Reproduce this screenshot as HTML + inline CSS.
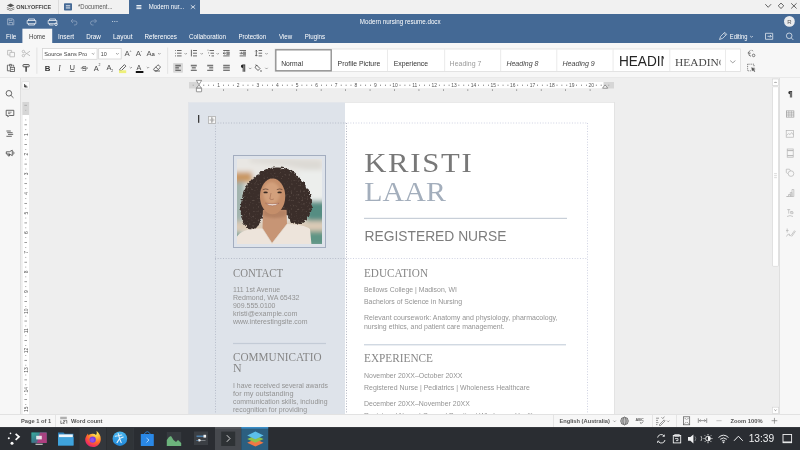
<!DOCTYPE html>
<html><head><meta charset="utf-8">
<style>
*{margin:0;padding:0;box-sizing:border-box}
html,body{width:800px;height:450px;overflow:hidden;background:#eeeeee;font-family:"Liberation Sans",sans-serif}
svg{position:absolute;left:0;top:0}
text{font-family:"Liberation Sans",sans-serif}
.sf,.sf text{font-family:"Liberation Serif",serif}
</style></head><body>
<svg width="800" height="450" viewBox="0 0 800 450" style="will-change:transform">
<defs>
<filter id="blur2" x="-20%" y="-20%" width="140%" height="140%"><feGaussianBlur stdDeviation="2.5"/></filter>
<filter id="blur1" x="-20%" y="-20%" width="140%" height="140%"><feGaussianBlur stdDeviation="0.8"/></filter>
<filter id="curl" x="-20%" y="-20%" width="140%" height="140%">
<feTurbulence type="fractalNoise" baseFrequency="0.35" numOctaves="2" seed="3" result="n"/>
<feDisplacementMap in="SourceGraphic" in2="n" scale="4.5" xChannelSelector="R" yChannelSelector="G"/>
</filter>
<filter id="tex" x="0" y="0" width="100%" height="100%">
<feTurbulence type="fractalNoise" baseFrequency="0.55" numOctaves="1" seed="7" result="n"/>
<feColorMatrix in="n" type="matrix" values="0 0 0 0 0.45  0 0 0 0 0.36  0 0 0 0 0.30  0 0 0 1.2 -0.7" result="c"/>
<feComposite in="c" in2="SourceGraphic" operator="in"/>
</filter>
<clipPath id="pclip"><rect x="237" y="159" width="85" height="85"/></clipPath>
</defs>
<!-- tab bar -->
<rect x="0" y="0" width="800" height="14" fill="#f1f1f1"/>
<!-- header -->
<rect x="0" y="14" width="800" height="29" fill="#446995"/>
<!-- toolbar -->
<rect x="0" y="43" width="800" height="35" fill="#f7f7f7"/>
<rect x="0" y="77.5" width="800" height="1" fill="#dcdcdc"/>
<!-- canvas -->
<rect x="0" y="78" width="800" height="336" fill="#eeeeee"/>
<!-- left panel -->
<rect x="0" y="78" width="20" height="336" fill="#f7f7f7"/>
<rect x="20" y="78" width="1" height="336" fill="#dfdfdf"/>
<!-- right panel -->
<rect x="780" y="78" width="20" height="336" fill="#f7f7f7"/>
<rect x="779" y="78" width="1" height="336" fill="#dfdfdf"/>
<!-- TAB BAR CONTENT -->
<g fill="#4a4a4a">
<!-- onlyoffice logo layers -->
<path d="M10.6 3.6 L14.3 5.4 L10.6 7.2 L6.9 5.4 Z" fill="#555"/>
<path d="M6.9 6.9 L10.6 8.7 L14.3 6.9 L14.3 7.6 L10.6 9.4 L6.9 7.6 Z" fill="#555"/>
<path d="M6.9 8.6 L10.6 10.4 L14.3 8.6 L14.3 9.3 L10.6 11.1 L6.9 9.3 Z" fill="#555"/>
</g>
<text x="16.3" y="9" font-size="5.6" font-weight="700" fill="#444" textLength="34.8" lengthAdjust="spacingAndGlyphs">ONLYOFFICE</text>
<rect x="58" y="0" width="1" height="14" fill="#dcdcdc"/>
<rect x="64" y="3.3" width="8" height="7.3" rx="0.8" fill="#446995"/>
<rect x="65.8" y="5.4" width="4.4" height="0.9" fill="#fff"/>
<rect x="65.8" y="7.5" width="4.4" height="0.9" fill="#fff"/>
<text x="78" y="9.3" font-size="6.6" fill="#555" textLength="34.5" lengthAdjust="spacingAndGlyphs">*Document...</text>
<!-- active tab -->
<rect x="129" y="0" width="71" height="14" fill="#446995"/>
<g fill="#fff"><rect x="136.4" y="5" width="5" height="0.9"/><rect x="136.4" y="6.6" width="5" height="0.9"/><rect x="136.4" y="8.2" width="5" height="0.9"/></g>
<text x="148.7" y="9.3" font-size="6.6" fill="#fff" textLength="35.5" lengthAdjust="spacingAndGlyphs">Modern nur...</text>
<path d="M190.8 5.2 L195.2 8.8 M195.2 5.2 L190.8 8.8" stroke="#fff" stroke-width="0.7"/>
<!-- window controls -->
<path d="M765.3 4.2 L768.2 7.3 L771.1 4.2" stroke="#555" stroke-width="0.9" fill="none"/>
<path d="M781 3.1 L783.8 5.8 L781 8.5 L778.2 5.8 Z" stroke="#555" stroke-width="0.9" fill="none"/>
<path d="M791.2 3.3 L796.6 8.5 M796.6 3.3 L791.2 8.5" stroke="#555" stroke-width="0.9"/>

<!-- HEADER ROW 1 -->
<path d="M7.6 18.8 h5 l1.2 1.2 v4.8 h-6.2 z M9 18.8 v1.8 h3 v-1.8 M9 24.8 v-2.3 h3.6 v2.3" stroke="#9fb2c9" stroke-width="0.8" fill="none"/>
<g stroke="#e6ebf1" stroke-width="0.85" fill="none">
<!-- print -->
<path d="M28.5 20.5 v-1.5 h6 v1.5 M27.2 20.5 h8.6 v3.2 h-8.6 z M28.5 23.7 v1.3 h6 v-1.3"/>
<!-- quick print -->
<path d="M49.5 20.5 v-1.5 h6 v1.5 M48.2 20.5 h8.6 v3.2 h-8.6 z M49.5 23.7 v1.3 h4"/>
<circle cx="56" cy="24.3" r="1.3"/>
</g>
<g stroke="#8aa0bd" stroke-width="0.8" fill="none">
<path d="M71 21 l2 -2 M71 21 l2 2 M71 21 h4 a2 2 0 0 1 0 4 h-1"/>
<path d="M96.5 21 l-2 -2 M96.5 21 l-2 2 M96.5 21 h-4 a2 2 0 0 0 0 4 h1"/>
</g>
<g fill="#dfe6ee"><circle cx="112.6" cy="21.5" r="0.55"/><circle cx="114.8" cy="21.5" r="0.55"/><circle cx="117" cy="21.5" r="0.55"/></g>
<text x="359.8" y="24" font-size="6.9" fill="#fff" textLength="80.8" lengthAdjust="spacingAndGlyphs">Modern nursing resume.docx</text>
<circle cx="789.4" cy="21.4" r="5.4" fill="#e9ebee"/>
<text x="789.4" y="23.5" font-size="6" fill="#555" text-anchor="middle">R</text>

<!-- HEADER ROW 2: tabs -->
<rect x="22.4" y="28.7" width="29.8" height="14.3" fill="#f7f7f7"/>
<g font-size="7" fill="#fff">
<text x="6.1" y="38.9" textLength="10.3" lengthAdjust="spacingAndGlyphs">File</text>
<text x="29" y="38.9" fill="#444" textLength="16.3" lengthAdjust="spacingAndGlyphs">Home</text>
<text x="57.9" y="38.9" textLength="16.2" lengthAdjust="spacingAndGlyphs">Insert</text>
<text x="86.2" y="38.9" textLength="14.7" lengthAdjust="spacingAndGlyphs">Draw</text>
<text x="112.9" y="38.9" textLength="19.6" lengthAdjust="spacingAndGlyphs">Layout</text>
<text x="144.5" y="38.9" textLength="32.3" lengthAdjust="spacingAndGlyphs">References</text>
<text x="189" y="38.9" textLength="36.9" lengthAdjust="spacingAndGlyphs">Collaboration</text>
<text x="238.4" y="38.9" textLength="27.7" lengthAdjust="spacingAndGlyphs">Protection</text>
<text x="279" y="38.9" textLength="13.2" lengthAdjust="spacingAndGlyphs">View</text>
<text x="304.8" y="38.9" textLength="20.3" lengthAdjust="spacingAndGlyphs">Plugins</text>
<text x="729.8" y="38.9" textLength="17.6" lengthAdjust="spacingAndGlyphs">Editing</text>
</g>
<g stroke="#dfe6ee" stroke-width="0.8" fill="none">
<path d="M719.5 39.5 l1.2 -3.2 l4 -4 l2 2 l-4 4 z M723.8 33.2 l2 2"/>
<path d="M750.2 36 l1.3 1.3 l1.3 -1.3"/>
<path d="M765.5 33.3 h7.2 v6 h-7.2 z M767.5 36.3 h3.8 M770 35 l1.3 1.3 l-1.3 1.3"/>
<circle cx="789.2" cy="35.8" r="2.8"/><path d="M791.2 37.8 l2.2 2.2"/>
</g>
<!-- TOOLBAR -->
<g fill="none" stroke-width="0.85">
<!-- copy (disabled) -->
<g stroke="#b8b8b8"><path d="M7.6 50.4 h4 v4.6 h-4 z"/><path d="M9.9 52.4 h4.6 v4.4 h-4.6 z" fill="#f7f7f7"/></g>
<!-- scissors (disabled) -->
<g stroke="#b8b8b8"><circle cx="23.4" cy="51.5" r="1.2"/><circle cx="23.4" cy="55.6" r="1.2"/><path d="M24.5 52.1 L30 55.8 M24.5 55 L30 51.2"/></g>
<!-- paste -->
<g stroke="#555"><path d="M8.6 65.2 h-1.2 v5.6 h2.4 M12.4 65.2 h1.2 v1.4 M9.4 64.4 h2.2 v1.6 h-2.2 z"/><rect x="10.3" y="67.3" width="4.2" height="4.2" fill="#f7f7f7"/><path d="M11.2 69.4 h2.4" /></g>
<!-- format painter -->
<g stroke="#333"><rect x="23" y="64.6" width="6.2" height="2.2" rx="0.6"/><path d="M26.1 66.8 v4.9" stroke-width="1.4"/></g>
</g>
<rect x="36.5" y="47.5" width="0.8" height="26.3" fill="#dedede"/>
<!-- font combos -->
<rect x="42.5" y="48.5" width="54.6" height="10.8" fill="#fff" stroke="#d4d4d4" stroke-width="0.8"/>
<text x="44.2" y="56.1" font-size="5.9" fill="#444" textLength="43" lengthAdjust="spacingAndGlyphs">Source Sans Pro</text>
<path d="M91.9 53.1 l1.3 1.3 l1.3 -1.3" stroke="#666" stroke-width="0.6" fill="none"/>
<rect x="98.7" y="48.4" width="22.5" height="10.6" fill="#fff" stroke="#d4d4d4" stroke-width="0.8"/>
<text x="100.8" y="56.1" font-size="5.9" fill="#444" textLength="6" lengthAdjust="spacingAndGlyphs">10</text>
<path d="M116.1 53.1 l1.3 1.3 l1.3 -1.3" stroke="#666" stroke-width="0.6" fill="none"/>
<g fill="#555">
<text x="124.6" y="56" font-size="7.8">A</text><text x="129.6" y="52.2" font-size="3.6">+</text>
<text x="135.8" y="56" font-size="7.8">A</text><text x="140.7" y="52.2" font-size="3.8">-</text>
<text x="146.6" y="56.2" font-size="7.8">A</text><text x="151.8" y="56.4" font-size="5.4" font-weight="700">a</text>
</g>
<path d="M158.1 53.1 l1.2 1.2 l1.2 -1.2" stroke="#666" stroke-width="0.6" fill="none"/>
<!-- row 2 text formatting -->
<text x="44.8" y="70.9" font-size="7.8" font-weight="700" fill="#333">B</text>
<text x="58.3" y="70.9" font-size="7.6" font-style="italic" fill="#444" class="sf">I</text>
<text x="69.8" y="70.3" font-size="7.2" fill="#444">U</text><rect x="69.7" y="71" width="5" height="0.7" fill="#444"/>
<text x="81.8" y="70.9" font-size="7.4" fill="#444">S</text><rect x="80.8" y="67.7" width="7.2" height="0.7" fill="#444"/>
<text x="93.8" y="71" font-size="7.4" fill="#444">A</text><text x="98.6" y="66.4" font-size="3.5" fill="#444">2</text>
<text x="106.4" y="70.4" font-size="7.4" fill="#444">A</text><text x="111.2" y="72" font-size="3.5" fill="#444">2</text>
<g fill="none" stroke="#444" stroke-width="0.8">
<path d="M119.8 69.2 l4.6 -4.6 l1.5 1.5 l-4.6 4.6 h-1.5 z"/>
<path d="M129.6 67 l1.2 1.2 l1.2 -1.2" stroke="#666" stroke-width="0.6"/>
<path d="M146.8 67 l1.2 1.2 l1.2 -1.2" stroke="#666" stroke-width="0.6"/>
<path d="M153.6 69.2 l3.8 -3.8 q0.8 -0.8 1.6 0 l0.9 0.9 q0.8 0.8 0 1.6 l-3 3 h-2.4 z M155.7 66.9 l2.6 2.6 M155 71 h5"/>
</g>
<rect x="119" y="70.3" width="7.2" height="2.8" fill="#eef07a"/>
<text x="136.6" y="70" font-size="7.2" fill="#444">A</text>
<rect x="135.8" y="71" width="7.6" height="2" fill="#111"/>
<rect x="167.3" y="47.5" width="0.8" height="26.3" fill="#dedede"/>
<!-- paragraph row1 -->
<g stroke="#444" stroke-width="0.8" fill="none">
<path d="M177 50.5 h4.6 M177 53.2 h4.6 M177 55.9 h4.6"/>
<path d="M175.3 50.5 h0.6 M175.3 53.2 h0.6 M175.3 55.9 h0.6" stroke-width="1.1"/>
<path d="M193 50.5 h4 M193 53.2 h4 M193 55.9 h4 M191.4 49.8 v6.6"/>
<path d="M209.5 50.5 h4.5 M210.5 53.2 h3.5 M211.5 55.9 h2.5 M207.6 50.2 h0.8 M208.3 52.9 h0.8 M209.2 55.6 h0.8"/>
<path d="M223.2 50.5 h6.4 M226.4 52.3 h3.2 M226.4 54.1 h3.2 M223.2 55.9 h6.4 M223.3 53.2 h2.6 M224.5 52 l-1.2 1.2 l1.2 1.2"/><rect x="226.6" y="51.8" width="3" height="2.8" fill="#888" stroke="none"/>
<path d="M239.6 50.5 h6.4 M242.8 52.3 h3.2 M242.8 54.1 h3.2 M239.6 55.9 h6.4 M239.6 53.2 h2.6 M241.2 52 l1.2 1.2 l-1.2 1.2"/><rect x="243" y="51.8" width="3" height="2.8" fill="#888" stroke="none"/>
<path d="M258.6 50.5 h3.5 M258.6 53.2 h3.5 M258.6 55.9 h3.5 M256.3 50.3 v5.8 M255.3 51.3 l1 -1 l1 1 M255.3 55.1 l1 1 l1 -1"/>
</g>
<g stroke="#666" stroke-width="0.6" fill="none">
<path d="M184.5 53.1 l1.2 1.2 l1.2 -1.2"/><path d="M200.5 53.1 l1.2 1.2 l1.2 -1.2"/><path d="M216.5 53.1 l1.2 1.2 l1.2 -1.2"/><path d="M265.3 53.1 l1.2 1.2 l1.2 -1.2"/>
<path d="M249 67.8 l1.2 1.2 l1.2 -1.2"/><path d="M265.3 67.8 l1.2 1.2 l1.2 -1.2"/>
</g>
<!-- paragraph row2 -->
<rect x="173.1" y="62.9" width="9.9" height="9.8" rx="0.8" fill="#d9d9d9"/>
<g stroke="#444" stroke-width="0.9" fill="none">
<path d="M175.3 65.3 h5.6 M175.3 67.8 h3.6 M175.3 70.3 h5.6"/>
<path d="M175.3 66.5 h5.6 M175.3 69 h3.6" stroke-width="0.5" stroke="#777"/>
<path d="M190.8 65.3 h6 M191.8 67.8 h4 M190.8 70.3 h6"/>
<path d="M190.8 66.5 h6 M191.8 69 h4" stroke-width="0.5" stroke="#888"/>
<path d="M207.2 65.3 h6 M209.2 67.8 h4 M207.2 70.3 h6"/>
<path d="M207.2 66.5 h6 M209.2 69 h4" stroke-width="0.5" stroke="#888"/>
<path d="M223.2 65.3 h6.6 M223.2 67.8 h6.6 M223.2 70.3 h6.6"/>
<path d="M223.2 66.5 h6.6 M223.2 69 h6.6" stroke-width="0.5" stroke="#888"/>
</g>
<g fill="#222"><path d="M242.4 64.5 h2.8 v7.2 h-0.9 v-6.4 h-0.7 v6.4 h-0.9 v-3.6 a1.8 1.8 0 0 1 0 -3.6 z"/></g>
<g stroke="#444" stroke-width="0.8" fill="none"><path d="M256.5 65 l3.5 3.5 l-2 2 l-2.4 -2.4 q-0.8 -0.8 0 -1.6 z M255.8 64.5 l1.5 1.5"/></g>
<circle cx="261" cy="71" r="0.7" fill="#333"/>
<!-- style gallery -->
<rect x="275" y="49" width="465.5" height="22.5" fill="#fff" stroke="#dcdcdc" stroke-width="0.8"/>
<g fill="#e2e2e2">
<rect x="387.2" y="49.5" width="0.7" height="21.5"/><rect x="444.4" y="49.5" width="0.7" height="21.5"/><rect x="500.4" y="49.5" width="0.7" height="21.5"/><rect x="556.5" y="49.5" width="0.7" height="21.5"/><rect x="612.7" y="49.5" width="0.7" height="21.5"/><rect x="669.5" y="49.5" width="0.7" height="21.5"/><rect x="725.3" y="49.5" width="0.7" height="21.5"/>
</g>
<rect x="275.8" y="49.8" width="55.4" height="21" fill="#fff" stroke="#8a8a8a" stroke-width="1.3"/>
<g font-size="7" fill="#333">
<text x="281.2" y="65.8" textLength="21.8" lengthAdjust="spacingAndGlyphs">Normal</text>
<text x="337.6" y="65.8" textLength="42.7" lengthAdjust="spacingAndGlyphs">Profile Picture</text>
<text x="393.7" y="65.8" textLength="34.4" lengthAdjust="spacingAndGlyphs">Experience</text>
<text x="449.6" y="65.8" fill="#9a9a9a" textLength="31.8" lengthAdjust="spacingAndGlyphs">Heading 7</text>
<text x="506.4" y="65.8" font-style="italic" fill="#444" textLength="32" lengthAdjust="spacingAndGlyphs">Heading 8</text>
<text x="562.5" y="65.8" font-style="italic" fill="#444" textLength="32.3" lengthAdjust="spacingAndGlyphs">Heading 9</text>
</g>
<svg x="613.5" y="49.5" width="50.3" height="21.5" overflow="hidden"><text x="0" y="0" font-size="14.2" fill="#262626" transform="translate(5.4 16.25) scale(0.96 1)">HEADING 1</text></svg>
<svg x="670.3" y="49.5" width="50.2" height="21.5" overflow="hidden"><text class="sf" x="0" y="0" font-size="11.4" fill="#4a4a4a" transform="translate(4.8 16.2) scale(1 1)">HEADING 2</text></svg>
<path d="M730.2 60.6 l2.6 2.2 l2.6 -2.2" stroke="#777" stroke-width="0.7" fill="none"/>
<g stroke="#555" stroke-width="0.75" fill="none">
<path d="M750.3 50.3 l-2.4 2.8 h2.8 M749 53.1 q-1 2.6 2 3.2"/><circle cx="753.6" cy="55.4" r="1.3"/><path d="M751.6 49.9 l1.3 1.3"/>
<path d="M747.6 64.2 h6.4 v3.2 M747.6 64.2 v6.6 h3.2" stroke-dasharray="1 0.8"/><path d="M751.6 67.5 l3.6 1.6 l-1.5 0.4 l1.3 1.8 l-0.7 0.4 l-1.2 -1.8 l-1 1.2 z" fill="#555" stroke-width="0.3"/>
</g>
<!-- left panel icons -->
<g stroke="#444" stroke-width="0.8" fill="none">
<circle cx="8.9" cy="93.3" r="2.8"/><path d="M10.9 95.3 l2.6 2.6"/>
<path d="M6.2 110.3 h7.6 v5.2 h-4.6 l-1.4 1.3 v-1.3 h-1.6 z"/><path d="M8 112.2 h3.6 M8 113.6 h2.4" stroke-width="0.6"/>
<path d="M6.4 131 h4.4 M7.2 132.7 h5.4 M8 134.4 h5.2 M6.4 136.3 h5.4"/>
<path d="M6.3 151.8 h3 l3 -1.6 v5.4 l-3 -1.6 h-3 z M8 153.9 v2 h1.5 v-2"/><path d="M13.2 151.6 a1.6 1.6 0 0 1 0 2.8"/>
</g>
<!-- ruler corner -->
<rect x="22" y="81.5" width="7.5" height="7.5" rx="0.8" fill="#fbfbfb" stroke="#d8d8d8" stroke-width="0.6"/>
<path d="M24.6 84 v3 h3" stroke="#444" stroke-width="0.9" fill="none"/><rect x="24.6" y="85.3" width="1.8" height="1.7" fill="#444"/>
<!-- horizontal ruler -->
<rect x="189" y="82" width="425" height="6.5" fill="#d6d6d6"/>
<rect x="198" y="82" width="405.5" height="6.5" fill="#fff"/>
<g id="hticks" fill="#666"><rect x="203.50" y="84.6" width="0.65" height="1.4"/><rect x="208.41" y="84.6" width="0.65" height="1.4"/><rect x="213.31" y="84.6" width="0.65" height="1.4"/><text x="218.52" y="87.2" font-size="4.9" text-anchor="middle" fill="#555">1</text><rect x="223.12" y="84.6" width="0.65" height="1.4"/><rect x="228.03" y="84.6" width="0.65" height="1.4"/><rect x="232.94" y="84.6" width="0.65" height="1.4"/><text x="238.14" y="87.2" font-size="4.9" text-anchor="middle" fill="#555">2</text><rect x="242.75" y="84.6" width="0.65" height="1.4"/><rect x="247.65" y="84.6" width="0.65" height="1.4"/><rect x="252.56" y="84.6" width="0.65" height="1.4"/><text x="257.76" y="87.2" font-size="4.9" text-anchor="middle" fill="#555">3</text><rect x="262.37" y="84.6" width="0.65" height="1.4"/><rect x="267.27" y="84.6" width="0.65" height="1.4"/><rect x="272.18" y="84.6" width="0.65" height="1.4"/><text x="277.38" y="87.2" font-size="4.9" text-anchor="middle" fill="#555">4</text><rect x="281.99" y="84.6" width="0.65" height="1.4"/><rect x="286.89" y="84.6" width="0.65" height="1.4"/><rect x="291.80" y="84.6" width="0.65" height="1.4"/><text x="297.00" y="87.2" font-size="4.9" text-anchor="middle" fill="#555">5</text><rect x="301.61" y="84.6" width="0.65" height="1.4"/><rect x="306.51" y="84.6" width="0.65" height="1.4"/><rect x="311.42" y="84.6" width="0.65" height="1.4"/><text x="316.62" y="87.2" font-size="4.9" text-anchor="middle" fill="#555">6</text><rect x="321.22" y="84.6" width="0.65" height="1.4"/><rect x="326.13" y="84.6" width="0.65" height="1.4"/><rect x="331.04" y="84.6" width="0.65" height="1.4"/><text x="336.24" y="87.2" font-size="4.9" text-anchor="middle" fill="#555">7</text><rect x="340.84" y="84.6" width="0.65" height="1.4"/><rect x="345.75" y="84.6" width="0.65" height="1.4"/><rect x="350.66" y="84.6" width="0.65" height="1.4"/><text x="355.86" y="87.2" font-size="4.9" text-anchor="middle" fill="#555">8</text><rect x="360.46" y="84.6" width="0.65" height="1.4"/><rect x="365.37" y="84.6" width="0.65" height="1.4"/><rect x="370.28" y="84.6" width="0.65" height="1.4"/><text x="375.48" y="87.2" font-size="4.9" text-anchor="middle" fill="#555">9</text><rect x="380.08" y="84.6" width="0.65" height="1.4"/><rect x="384.99" y="84.6" width="0.65" height="1.4"/><rect x="389.90" y="84.6" width="0.65" height="1.4"/><text x="395.10" y="87.2" font-size="4.9" text-anchor="middle" fill="#555">10</text><rect x="399.70" y="84.6" width="0.65" height="1.4"/><rect x="404.61" y="84.6" width="0.65" height="1.4"/><rect x="409.52" y="84.6" width="0.65" height="1.4"/><text x="414.72" y="87.2" font-size="4.9" text-anchor="middle" fill="#555">11</text><rect x="419.32" y="84.6" width="0.65" height="1.4"/><rect x="424.23" y="84.6" width="0.65" height="1.4"/><rect x="429.14" y="84.6" width="0.65" height="1.4"/><text x="434.34" y="87.2" font-size="4.9" text-anchor="middle" fill="#555">12</text><rect x="438.94" y="84.6" width="0.65" height="1.4"/><rect x="443.85" y="84.6" width="0.65" height="1.4"/><rect x="448.75" y="84.6" width="0.65" height="1.4"/><text x="453.96" y="87.2" font-size="4.9" text-anchor="middle" fill="#555">13</text><rect x="458.56" y="84.6" width="0.65" height="1.4"/><rect x="463.47" y="84.6" width="0.65" height="1.4"/><rect x="468.38" y="84.6" width="0.65" height="1.4"/><text x="473.58" y="87.2" font-size="4.9" text-anchor="middle" fill="#555">14</text><rect x="478.19" y="84.6" width="0.65" height="1.4"/><rect x="483.09" y="84.6" width="0.65" height="1.4"/><rect x="488.00" y="84.6" width="0.65" height="1.4"/><text x="493.20" y="87.2" font-size="4.9" text-anchor="middle" fill="#555">15</text><rect x="497.81" y="84.6" width="0.65" height="1.4"/><rect x="502.71" y="84.6" width="0.65" height="1.4"/><rect x="507.62" y="84.6" width="0.65" height="1.4"/><text x="512.82" y="87.2" font-size="4.9" text-anchor="middle" fill="#555">16</text><rect x="517.43" y="84.6" width="0.65" height="1.4"/><rect x="522.33" y="84.6" width="0.65" height="1.4"/><rect x="527.24" y="84.6" width="0.65" height="1.4"/><text x="532.44" y="87.2" font-size="4.9" text-anchor="middle" fill="#555">17</text><rect x="537.05" y="84.6" width="0.65" height="1.4"/><rect x="541.95" y="84.6" width="0.65" height="1.4"/><rect x="546.86" y="84.6" width="0.65" height="1.4"/><text x="552.06" y="87.2" font-size="4.9" text-anchor="middle" fill="#555">18</text><rect x="556.67" y="84.6" width="0.65" height="1.4"/><rect x="561.57" y="84.6" width="0.65" height="1.4"/><rect x="566.48" y="84.6" width="0.65" height="1.4"/><text x="571.68" y="87.2" font-size="4.9" text-anchor="middle" fill="#555">19</text><rect x="576.29" y="84.6" width="0.65" height="1.4"/><rect x="581.19" y="84.6" width="0.65" height="1.4"/><rect x="586.10" y="84.6" width="0.65" height="1.4"/><text x="591.30" y="87.2" font-size="4.9" text-anchor="middle" fill="#555">20</text><rect x="595.91" y="84.6" width="0.65" height="1.4"/><rect x="600.81" y="84.6" width="0.65" height="1.4"/><rect x="223.00" y="89.3" width="0.7" height="1.5"/><rect x="247.45" y="89.3" width="0.7" height="1.5"/><rect x="271.90" y="89.3" width="0.7" height="1.5"/><rect x="296.35" y="89.3" width="0.7" height="1.5"/><rect x="320.80" y="89.3" width="0.7" height="1.5"/><rect x="345.25" y="89.3" width="0.7" height="1.5"/><rect x="369.70" y="89.3" width="0.7" height="1.5"/><rect x="394.15" y="89.3" width="0.7" height="1.5"/><rect x="418.60" y="89.3" width="0.7" height="1.5"/><rect x="443.05" y="89.3" width="0.7" height="1.5"/><rect x="467.50" y="89.3" width="0.7" height="1.5"/><rect x="491.95" y="89.3" width="0.7" height="1.5"/><rect x="516.40" y="89.3" width="0.7" height="1.5"/><rect x="540.85" y="89.3" width="0.7" height="1.5"/><rect x="565.30" y="89.3" width="0.7" height="1.5"/><rect x="589.75" y="89.3" width="0.7" height="1.5"/></g>
<!-- indent markers -->
<g fill="#fff" stroke="#555" stroke-width="0.6">
<path d="M196.4 80.4 h5.2 l-2.6 4.4 z"/><path d="M199 85 l2.6 3.2 h-5.2 z"/><rect x="196.4" y="88.2" width="5.2" height="3.6" rx="0.5"/>
<path d="M602.5 88.2 l2.6 -3.3 l2.6 3.3 z"/>
</g>
<!-- vertical ruler -->
<rect x="22.4" y="102" width="6.7" height="312" fill="#d6d6d6"/>
<rect x="22.4" y="115" width="6.7" height="299" fill="#fff"/>
<rect x="24.4" y="104.9" width="2.6" height="0.65" fill="#999"/><rect x="25.3" y="109.9" width="0.9" height="0.65" fill="#999"/><rect x="192.8" y="84.6" width="0.65" height="1.4" fill="#999"/><rect x="608.5" y="84.6" width="0.65" height="1.4" fill="#999"/>
<g id="vticks" fill="#666"><rect x="25.3" y="119.61" width="0.9" height="0.65"/><rect x="24.4" y="124.51" width="2.6" height="0.65"/><rect x="25.3" y="129.41" width="0.9" height="0.65"/><text transform="translate(27.6 134.62) rotate(-90)" font-size="4.9" text-anchor="middle" fill="#555">1</text><rect x="25.3" y="139.22" width="0.9" height="0.65"/><rect x="24.4" y="144.13" width="2.6" height="0.65"/><rect x="25.3" y="149.03" width="0.9" height="0.65"/><text transform="translate(27.6 154.24) rotate(-90)" font-size="4.9" text-anchor="middle" fill="#555">2</text><rect x="25.3" y="158.84" width="0.9" height="0.65"/><rect x="24.4" y="163.75" width="2.6" height="0.65"/><rect x="25.3" y="168.66" width="0.9" height="0.65"/><text transform="translate(27.6 173.86) rotate(-90)" font-size="4.9" text-anchor="middle" fill="#555">3</text><rect x="25.3" y="178.46" width="0.9" height="0.65"/><rect x="24.4" y="183.37" width="2.6" height="0.65"/><rect x="25.3" y="188.27" width="0.9" height="0.65"/><text transform="translate(27.6 193.48) rotate(-90)" font-size="4.9" text-anchor="middle" fill="#555">4</text><rect x="25.3" y="198.08" width="0.9" height="0.65"/><rect x="24.4" y="202.99" width="2.6" height="0.65"/><rect x="25.3" y="207.89" width="0.9" height="0.65"/><text transform="translate(27.6 213.10) rotate(-90)" font-size="4.9" text-anchor="middle" fill="#555">5</text><rect x="25.3" y="217.70" width="0.9" height="0.65"/><rect x="24.4" y="222.61" width="2.6" height="0.65"/><rect x="25.3" y="227.51" width="0.9" height="0.65"/><text transform="translate(27.6 232.72) rotate(-90)" font-size="4.9" text-anchor="middle" fill="#555">6</text><rect x="25.3" y="237.32" width="0.9" height="0.65"/><rect x="24.4" y="242.23" width="2.6" height="0.65"/><rect x="25.3" y="247.13" width="0.9" height="0.65"/><text transform="translate(27.6 252.34) rotate(-90)" font-size="4.9" text-anchor="middle" fill="#555">7</text><rect x="25.3" y="256.94" width="0.9" height="0.65"/><rect x="24.4" y="261.85" width="2.6" height="0.65"/><rect x="25.3" y="266.75" width="0.9" height="0.65"/><text transform="translate(27.6 271.96) rotate(-90)" font-size="4.9" text-anchor="middle" fill="#555">8</text><rect x="25.3" y="276.56" width="0.9" height="0.65"/><rect x="24.4" y="281.47" width="2.6" height="0.65"/><rect x="25.3" y="286.38" width="0.9" height="0.65"/><text transform="translate(27.6 291.58) rotate(-90)" font-size="4.9" text-anchor="middle" fill="#555">9</text><rect x="25.3" y="296.19" width="0.9" height="0.65"/><rect x="24.4" y="301.09" width="2.6" height="0.65"/><rect x="25.3" y="306.00" width="0.9" height="0.65"/><text transform="translate(27.6 311.20) rotate(-90)" font-size="4.9" text-anchor="middle" fill="#555">10</text><rect x="25.3" y="315.81" width="0.9" height="0.65"/><rect x="24.4" y="320.71" width="2.6" height="0.65"/><rect x="25.3" y="325.62" width="0.9" height="0.65"/><text transform="translate(27.6 330.82) rotate(-90)" font-size="4.9" text-anchor="middle" fill="#555">11</text><rect x="25.3" y="335.43" width="0.9" height="0.65"/><rect x="24.4" y="340.33" width="2.6" height="0.65"/><rect x="25.3" y="345.24" width="0.9" height="0.65"/><text transform="translate(27.6 350.44) rotate(-90)" font-size="4.9" text-anchor="middle" fill="#555">12</text><rect x="25.3" y="355.05" width="0.9" height="0.65"/><rect x="24.4" y="359.95" width="2.6" height="0.65"/><rect x="25.3" y="364.85" width="0.9" height="0.65"/><text transform="translate(27.6 370.06) rotate(-90)" font-size="4.9" text-anchor="middle" fill="#555">13</text><rect x="25.3" y="374.67" width="0.9" height="0.65"/><rect x="24.4" y="379.57" width="2.6" height="0.65"/><rect x="25.3" y="384.48" width="0.9" height="0.65"/><text transform="translate(27.6 389.68) rotate(-90)" font-size="4.9" text-anchor="middle" fill="#555">14</text><rect x="25.3" y="394.29" width="0.9" height="0.65"/><rect x="24.4" y="399.19" width="2.6" height="0.65"/><rect x="25.3" y="404.10" width="0.9" height="0.65"/><text transform="translate(27.6 409.30) rotate(-90)" font-size="4.9" text-anchor="middle" fill="#555">15</text></g>
<!-- scrollbar -->
<rect x="772.5" y="79" width="6" height="6.3" fill="#fff" stroke="#d2d2d2" stroke-width="0.6"/>
<path d="M774.4 83 l1.1 -1.1 l1.1 1.1" stroke="#666" stroke-width="0.7" fill="none"/>
<rect x="772.5" y="86.7" width="6" height="179.7" rx="1" fill="#fff" stroke="#d2d2d2" stroke-width="0.6"/>
<g fill="#c2c2c2"><rect x="774.1" y="173.5" width="2.8" height="0.6"/><rect x="774.1" y="175.5" width="2.8" height="0.6"/><rect x="774.1" y="177.5" width="2.8" height="0.6"/></g>
<rect x="772.3" y="407.2" width="6.4" height="6.3" fill="#fff" stroke="#d2d2d2" stroke-width="0.6"/>
<path d="M774.4 409.6 l1.1 1.1 l1.1 -1.1" stroke="#666" stroke-width="0.7" fill="none"/>
<!-- right panel icons -->
<path d="M789.5 91 h2.6 v6.4 h-0.8 v-5.6 h-0.6 v5.6 h-0.8 v-3.2 a1.6 1.6 0 0 1 0 -3.2 z" fill="#333"/>
<g stroke="#8c8c8c" stroke-width="0.7" fill="none">
<rect x="786.3" y="110.9" width="7.6" height="6.2" stroke-width="0.6"/><path d="M786.3 112.9 h7.6 M786.3 115 h7.6" stroke-width="0.6"/><path d="M788.8 110.9 v6.2 M791.4 110.9 v6.2" stroke-width="0.45"/>
</g>
<g stroke="#b4b4b4" stroke-width="0.7" fill="none">
<rect x="786.2" y="130.4" width="7.4" height="6.8"/><path d="M786.6 135.5 l2 -2 l1.4 1.2 l1.6 -2.2 l2 2.6"/>
<rect x="787.2" y="149" width="6" height="8.2"/><path d="M787.2 150.6 h6 M787.2 155.6 h6" stroke-width="1"/>
<path d="M786.3 169.2 h3.2 l1.2 1.8"/><path d="M786.3 169.2 v3.4 l1.6 1"/><circle cx="791" cy="173.6" r="2.8"/>
<path d="M786.5 196.5 h2 v-2 h1.8 v2 M790.3 196.5 v-4 h1.6 v4 M792 196.5 v-7 h1.8 v7 h-7.3"/>
<path d="M787.2 209.6 h3 M788.7 209.6 v4 M790.2 211.6 h2 a0.8 0.8 0 0 1 0.8 0.8 v1.2 h-1.8 a0.8 0.8 0 0 1 0 -1.6 h1.6 M787 216.5 q3 -1.8 6 0"/>
<path d="M787.2 228.5 v4 M786 230.5 h2.6 M786.5 236.5 q1 -3 3 -2.4 q-1 2 1.4 1.6 l3.6 -5 l0.8 0.8 l-3.6 5" />
</g>
<!-- PAGE -->
<rect x="188" y="102" width="426" height="312" fill="#fff"/>
<rect x="188" y="102" width="157" height="312" fill="#dee3ea"/>
<rect x="188" y="102" width="1.2" height="312" fill="#e2e4e8"/>
<rect x="614" y="102" width="1" height="312" fill="#e3e3e3"/>
<rect x="345" y="102" width="269" height="1" fill="#e9e9e9"/>
<rect x="189" y="102" width="156" height="1" fill="#e3e6eb"/>
<g stroke="#b6bcc9" stroke-width="1" stroke-dasharray="1 1.67" fill="none">
<line x1="215" y1="123" x2="345" y2="123"/>
<line x1="215" y1="258.5" x2="345" y2="258.5"/>
<line x1="215.5" y1="123" x2="215.5" y2="414"/>
</g>
<g stroke="#cfd2e2" stroke-width="1" stroke-dasharray="1 1.67" fill="none">
<line x1="345" y1="123" x2="588" y2="123"/>
<line x1="345" y1="258.5" x2="588" y2="258.5"/>
<line x1="587.5" y1="123" x2="587.5" y2="414"/>
</g>
<line x1="346.5" y1="123" x2="346.5" y2="414" stroke="#b0b3bf" stroke-width="1" stroke-dasharray="1 1.67"/>
<rect x="198" y="115" width="1.3" height="7.8" fill="#3a3a3a"/>
<rect x="208.5" y="116.5" width="7" height="7" fill="#f6f6f6" stroke="#b0b0b0" stroke-width="0.8"/>
<path d="M212 117.6v4.8M209.6 120h4.8M211.2 118.4l0.8-0.8l0.8 0.8M211.2 121.6l0.8 0.8l0.8-0.8" stroke="#666" stroke-width="0.55" fill="none"/>
<rect x="233.5" y="155.5" width="92" height="92" fill="#dee3ea" stroke="#a3adbf" stroke-width="1"/>
<text class="sf" x="0" y="0" font-size="27.4" fill="#787878" textLength="96" lengthAdjust="spacing" transform="translate(364.2 172) scale(1.12 1)">KRISTI</text>
<text class="sf" x="0" y="0" font-size="26.6" fill="#a3aebc" textLength="73" lengthAdjust="spacing" transform="translate(364.2 200.8) scale(1.12 1)">LAAR</text>
<rect x="364" y="217.8" width="203" height="1.1" fill="#c3cad4"/>
<text x="364.5" y="241" font-size="14.6" fill="#7d7d7d" textLength="142" lengthAdjust="spacingAndGlyphs">REGISTERED NURSE</text>
<g class="sf" font-size="12" fill="#868686">
<text x="233" y="277" textLength="50.2" lengthAdjust="spacingAndGlyphs">CONTACT</text>
<text x="233" y="361" textLength="88.5" lengthAdjust="spacingAndGlyphs">COMMUNICATIO</text>
<text x="233" y="372.3">N</text>
<text x="364" y="277" textLength="64" lengthAdjust="spacingAndGlyphs">EDUCATION</text>
<text x="364" y="362" textLength="69" lengthAdjust="spacingAndGlyphs">EXPERIENCE</text>
</g>
<g font-size="7.1" fill="#939393">
<text x="233" y="292" textLength="47.2" lengthAdjust="spacingAndGlyphs">111 1st Avenue</text>
<text x="233" y="300" textLength="66.5" lengthAdjust="spacingAndGlyphs">Redmond, WA 65432</text>
<text x="233" y="308" textLength="42.5" lengthAdjust="spacingAndGlyphs">909.555.0100</text>
<text x="233" y="316" textLength="64.5" lengthAdjust="spacingAndGlyphs">kristi@example.com</text>
<text x="233" y="324" textLength="74.5" lengthAdjust="spacingAndGlyphs">www.interestingsite.com</text>
<text x="233" y="388" textLength="95" lengthAdjust="spacingAndGlyphs">I have received several awards</text>
<text x="233" y="396" textLength="60.5" lengthAdjust="spacingAndGlyphs">for my outstanding</text>
<text x="233" y="404" textLength="94.5" lengthAdjust="spacingAndGlyphs">communication skills, including</text>
<text x="233" y="412" textLength="74" lengthAdjust="spacingAndGlyphs">recognition for providing</text>
<text x="364" y="292.4" textLength="93" lengthAdjust="spacingAndGlyphs">Bellows College | Madison, WI</text>
<text x="364" y="304.4" textLength="98" lengthAdjust="spacingAndGlyphs">Bachelors of Science in Nursing</text>
<text x="364" y="320.4" textLength="193.5" lengthAdjust="spacingAndGlyphs">Relevant coursework: Anatomy and physiology, pharmacology,</text>
<text x="364" y="329" textLength="140.5" lengthAdjust="spacingAndGlyphs">nursing ethics, and patient care management.</text>
<text x="364" y="378" textLength="98.5" lengthAdjust="spacingAndGlyphs">November 20XX–October 20XX</text>
<text x="364" y="390" textLength="165.8" lengthAdjust="spacingAndGlyphs">Registered Nurse | Pediatrics | Wholeness Healthcare</text>
<text x="364" y="406" textLength="105.8" lengthAdjust="spacingAndGlyphs">December 20XX–November 20XX</text>
<text x="364" y="418" textLength="184" lengthAdjust="spacingAndGlyphs">Registered Nurse | General Practice | Wholeness Healthcare</text>
</g>
<rect x="233" y="342.9" width="93" height="1.2" fill="#c3cbd6"/>
<rect x="364" y="344.1" width="202" height="1.3" fill="#cdd5df"/>
<!-- PHOTO -->
<g clip-path="url(#pclip)">
<rect x="237" y="159" width="85" height="85" fill="#e3e1dd"/>
<g filter="url(#blur2)">
<rect x="230" y="152" width="100" height="24" fill="#e9e7e3"/>
<path d="M250 162 L290 166 L322 174 L322 160 L250 158 Z" fill="#dcd9d4"/>
<rect x="298" y="170" width="30" height="38" fill="#eceeec"/>
<rect x="230" y="172" width="22" height="10" fill="#c99660"/>
<rect x="230" y="182" width="14" height="42" fill="#a2b4ae"/>
<rect x="306" y="201" width="22" height="20" fill="#558d82"/>
<rect x="230" y="221.5" width="100" height="9.5" fill="#dbcab6"/>
<rect x="304" y="231" width="24" height="16" fill="#5f9585"/>
<rect x="230" y="232" width="12" height="15" fill="#7aa297"/>
</g>
<!-- hair -->
<path id="hairp" d="M275 167.5 C283 167.2 288 168.5 290.6 170.6 C297 174 302 180 306 186 C310 192 312 198 312.5 203.4 C312.5 209 310.5 214 307.8 217.5 C305.5 221 303 223 300 223.75 C296 224 293 223.5 291 223 L287 214 L263 214 C261 222 257 229 253 230 C249 229.5 246 227 243.75 223.75 C241.5 219 240.4 213 240.6 208 C240.8 202 242 197 243.75 192.5 C246 185 251.5 178 259 173.75 C264 170 269.5 167.7 275 167.5 Z" fill="#3a2f2a" filter="url(#curl)"/>
<g filter="url(#tex)"><path d="M275 167.5 C283 167.2 288 168.5 290.6 170.6 C297 174 302 180 306 186 C310 192 312 198 312.5 203.4 C312.5 209 310.5 214 307.8 217.5 C305.5 221 303 223 300 223.75 C296 224 293 223.5 291 223 L287 214 L263 214 C261 222 257 229 253 230 C249 229.5 246 227 243.75 223.75 C241.5 219 240.4 213 240.6 208 C240.8 202 242 197 243.75 192.5 C246 185 251.5 178 259 173.75 C264 170 269.5 167.7 275 167.5 Z" fill="#000"/></g>
<!-- neck -->
<path d="M263 210 L286.5 210 L287 224.1 L272 243.3 L262.5 228.4 Z" fill="#c79575"/><path d="M263 210 L286.5 210 L286 216 Q275 220 263.5 216 Z" fill="#a87658" opacity="0.6" filter="url(#blur1)"/>
<!-- face -->
<ellipse cx="272.6" cy="196.4" rx="12.6" ry="17.8" fill="#c48e6a"/>
<ellipse cx="271.5" cy="193" rx="8.5" ry="11" fill="#d3a07c" filter="url(#blur1)"/><path d="M271 193 l-1.2 6 q2 1.2 4 0" stroke="#a06a50" stroke-width="0.6" fill="none"/>
<ellipse cx="265.6" cy="192.4" rx="2.2" ry="0.95" fill="#3a2a22"/><ellipse cx="279.6" cy="192.4" rx="2.2" ry="0.95" fill="#3a2a22"/>
<path d="M262.8 189.6 q3 -1.3 5.6 0 M276.8 189.6 q3 -1.3 5.6 0" stroke="#4a3028" stroke-width="0.6" fill="none"/>
<path d="M265.5 203.2 q6.8 5.2 13.6 0 q-6.8 1.6 -13.6 0 z" fill="#f6f0ea" stroke="#9a5a48" stroke-width="0.5"/>
<!-- top -->
<path d="M236 245 L236 238 C239 233 244 228 262.5 228.4 L272 243.3 L287 224.1 C298 224.3 306 226 310 229 L311.5 245 Z" fill="#ede4db"/>
<path d="M262.5 228.4 L272 243.3 L287 224.1" stroke="#dccdc0" stroke-width="0.6" fill="none"/>
</g>
<!-- STATUS BAR -->
<rect x="0" y="414" width="800" height="13" fill="#f7f7f7"/>
<rect x="0" y="414" width="800" height="0.8" fill="#dcdcdc"/>
<g font-size="5.7" font-weight="700" fill="#555">
<text x="21" y="423.1" textLength="30.3" lengthAdjust="spacingAndGlyphs">Page 1 of 1</text>
<text x="71" y="423.1" textLength="31.5" lengthAdjust="spacingAndGlyphs">Word count</text>
<text x="559.4" y="423.1" textLength="50.5" lengthAdjust="spacingAndGlyphs">English (Australia)</text>
<text x="730.5" y="423.1" textLength="32" lengthAdjust="spacingAndGlyphs">Zoom 100%</text>
</g>
<g fill="#dcdcdc"><rect x="55.3" y="415" width="0.7" height="12"/><rect x="553.3" y="415" width="0.7" height="12"/><rect x="652.2" y="415" width="0.7" height="12"/><rect x="676.3" y="415" width="0.7" height="12"/></g>
<g stroke="#555" stroke-width="0.7" fill="none">
<path d="M60.2 417.3 h6.6 M60.2 418.7 h6.6" stroke="#777"/>
<path d="M60.8 420.5 v3 h1.6 M63.2 420.5 h1.4 v1.5 h-1.4 v1.5 h1.4 M65.4 420.5 h1.4 v3"/>
<path d="M613.4 420.6 l1.2 1.2 l1.2 -1.2" stroke="#666" stroke-width="0.6"/>
<circle cx="624.5" cy="421" r="3.8"/><ellipse cx="624.5" cy="421" rx="1.6" ry="3.8"/><path d="M620.7 421 h7.6 M621.3 419 h6.4 M621.3 423 h6.4"/>
<path d="M643.2 421.5 l-2 2 l-1.3 -1.2" stroke-width="0.8"/>
<path d="M667 420.6 l1.2 1.2 l1.2 -1.2" stroke="#666" stroke-width="0.6"/>
<path d="M656 418.2 h3 M656 420.4 h2 M656 422.6 h2.5 M656 424.6 h1.5 M659.5 424.5 l4.6 -4.6 l1 1 l-4.6 4.6 h-1 z M661.5 417.3 l1.3 1.3 l1.6 -2" stroke-width="0.6"/>
<rect x="683.5" y="416.8" width="6.2" height="8"/>
<path d="M684.7 418 l1.5 1.5 M688.5 418 l-1.5 1.5 M684.7 423.6 l1.5 -1.5 M688.5 423.6 l-1.5 -1.5" stroke-width="0.6"/>
<path d="M698.3 418.3 v4.6 M706.7 418.3 v4.6 M699.3 420.6 h6.4 M700.6 419.4 l-1.2 1.2 l1.2 1.2 M704.4 419.4 l1.2 1.2 l-1.2 1.2" stroke-width="0.6"/>
<path d="M716.4 420.7 h5.2" stroke="#aaa"/>
<path d="M771.6 420.7 h5.7 M774.45 417.9 v5.7" stroke="#777"/>
</g>
<text x="635.6" y="420.6" font-size="3.6" font-weight="700" fill="#555" textLength="8" lengthAdjust="spacingAndGlyphs">ABC</text>
<!-- TASKBAR -->
<rect x="0" y="427" width="800" height="23" fill="#2a2d32"/>
<rect x="0" y="427" width="800" height="0.8" fill="#3a3d42"/>
<rect x="79.6" y="427.8" width="26.7" height="22.2" fill="#33373c"/>
<rect x="215" y="427" width="26.3" height="23" fill="#46494e"/>
<rect x="215" y="427" width="26.3" height="1.6" fill="#56595e"/>
<rect x="241.3" y="427" width="26.9" height="23" fill="#2c5f80"/>
<rect x="241.3" y="427" width="26.9" height="1.6" fill="#3b8cc4"/>
<!-- launcher -->
<g fill="#fcfcfc"><circle cx="10.5" cy="433.4" r="0.8"/><circle cx="8.8" cy="438.3" r="1"/><circle cx="12" cy="443.3" r="1.5"/></g>
<path d="M15.6 433.8 l3.4 3 l-3.4 3" stroke="#fcfcfc" stroke-width="1.7" fill="none"/>
<!-- monitor -->
<defs><linearGradient id="mg" x1="0" y1="0" x2="1" y2="1"><stop offset="0" stop-color="#3ab0a0"/><stop offset="0.5" stop-color="#3a7a8a"/><stop offset="1" stop-color="#c03d84"/></linearGradient></defs>
<rect x="31.2" y="432.3" width="15.6" height="10.8" rx="0.8" fill="url(#mg)" stroke="#1f4a50" stroke-width="0.4"/>
<path d="M40 432.5 L46.7 432.5 L46.7 443 L37 443 Z" fill="#b13d7f" opacity="0.9"/>
<rect x="36.2" y="435.8" width="5.6" height="3.6" fill="#f4f4f4" opacity="0.9"/>
<rect x="35.5" y="443.7" width="7.2" height="1.2" fill="#c8c8c8"/>
<!-- folder -->
<path d="M58 432.5 h5.5 l1.2 1.2 h8.8 v11.8 h-15.5 z" fill="#2a7fb8"/>
<rect x="58.8" y="434.4" width="14" height="3.2" fill="#eef6fb"/>
<rect x="58" y="437.2" width="15.5" height="8.3" fill="#3fa3dc"/>
<!-- firefox -->
<defs><radialGradient id="ffg" cx="0.7" cy="0.15" r="0.95"><stop offset="0" stop-color="#fff05a"/><stop offset="0.3" stop-color="#ffb83a"/><stop offset="0.6" stop-color="#ff6a2a"/><stop offset="0.85" stop-color="#f0305a"/><stop offset="1" stop-color="#d22a7a"/></radialGradient></defs>
<path d="M88 433.5 C86 436 85.2 438 85.2 439.5 C85.2 443.8 88.7 447 93 447 C97.3 447 100.8 443.5 100.8 439.2 C100.8 435.5 99 433 96.5 430.8 C97 433 96.8 434.2 96 435 C95 434 93.6 433.6 92.2 433.8 C90.6 434 89.2 434.6 88.5 435.5 Z" fill="url(#ffg)"/>
<circle cx="92.7" cy="439.6" r="3.2" fill="#7b3fe0"/>
<circle cx="92.2" cy="440" r="2" fill="#9350ea"/>
<rect x="106.3" y="427.8" width="26.7" height="22.2" fill="#303438"/>
<rect x="106.3" y="427.8" width="0.6" height="22.2" fill="#2a2d32"/>
<!-- kde connect-ish -->
<defs><linearGradient id="kc" x1="0" y1="0" x2="0" y2="1"><stop offset="0" stop-color="#4ab8f0"/><stop offset="1" stop-color="#1f86d8"/></linearGradient></defs>
<circle cx="119.9" cy="438.7" r="7.3" fill="url(#kc)"/>
<path d="M115.2 436.2 l6.6 -1.2 M118.2 433.6 l1.4 5 l-2.6 4 M119.6 438.6 l3.6 -1.6 M119.6 438.6 l1.6 4" stroke="#e8f2f8" stroke-width="1.1" fill="none" stroke-linecap="round"/>
<rect x="133" y="427.8" width="0.6" height="22" fill="#3a3d42"/>
<!-- discover -->
<path d="M144.3 434 q3 -4.6 6 0" stroke="#2a8ae8" stroke-width="0.8" fill="none"/>
<rect x="140.8" y="434" width="13" height="12" rx="0.6" fill="#2a88e6"/>
<path d="M146.5 438 l2.5 2 l-2.5 2.5" stroke="#bfe0ff" stroke-width="0.8" fill="none"/>
<!-- system monitor -->
<rect x="166.8" y="432" width="14.4" height="14" fill="#363a3f"/>
<path d="M166.8 446 L166.8 440 L169 437 L171 436 L173.5 440 L176 442 L178 440 L181.2 443 L181.2 446 Z" fill="#6cb37c"/>
<!-- settings -->
<rect x="194" y="431.5" width="14" height="13.5" fill="#3b3f44"/>
<rect x="196.5" y="435.5" width="9" height="1.6" fill="#4d7ea8"/><rect x="203.5" y="434.8" width="2.6" height="2.8" fill="#f0f0f0"/>
<rect x="196.5" y="440" width="9" height="0.8" fill="#8a8f94"/><rect x="198" y="439" width="2.6" height="2.6" rx="1.3" fill="#f0f0f0"/><rect x="196.5" y="440" width="2" height="0.8" fill="#4d7ea8"/>
<!-- terminal -->
<rect x="221.2" y="431.6" width="14" height="14.4" fill="#2e3235"/>
<path d="M226.8 435.2 l3.2 3.3 l-3.2 3.3" stroke="#e6e6e6" stroke-width="0.9" fill="none"/>
<!-- onlyoffice -->
<path d="M255.4 446.4 l-8.2 -3.7 l8.2 -3.7 l8.2 3.7 z" fill="#f07845"/>
<path d="M255.4 442.8 l-8.2 -3.7 l8.2 -3.7 l8.2 3.7 z" fill="#8dc34c"/>
<path d="M255.4 439.3 l-8.2 -3.9 l8.2 -3.9 l8.2 3.9 z" fill="#5cc0ea"/>
<!-- tray -->
<g stroke="#eff0f1" stroke-width="0.9" fill="none">
<path d="M657.6 437.6 a3.7 3.7 0 0 1 6.6 -1.6 M665 440 a3.7 3.7 0 0 1 -6.6 1.6"/>
<path d="M664.4 434.6 v1.8 h-1.8 M657.6 443 v-1.8 h1.8" stroke-width="0.8"/>
<rect x="673.3" y="435.5" width="7.4" height="7.4"/><path d="M674.6 434.6 h4.8 v1.8 h-4.8 z M675 438.6 h3 v2 h-2" stroke-width="0.8"/>
<path d="M701 436 q1.5 2.5 0 5" stroke-width="0.7"/>
<circle cx="708" cy="438.6" r="2.4"/><path d="M708 434 v1.2 M708 442 v1.2 M703.5 438.6 h1.2 M711.3 438.6 h1.2 M704.8 435.4 l0.8 0.8 M710.4 441 l0.8 0.8 M704.8 441.8 l0.8 -0.8 M710.4 436.2 l0.8 -0.8"/>
<path d="M718.5 437.5 q5 -4.6 10 0 M720.2 439.3 q3.3 -2.8 6.6 0 M721.9 441 q1.6 -1.3 3.2 0" stroke-width="0.95"/>
<path d="M734 440.8 l4.4 -4.6 l4.4 4.6" stroke-width="1"/>
<rect x="783" y="434.5" width="8.6" height="8.2"/>
</g>
<path d="M688 437 h2.4 l3 -2.6 v9 l-3 -2.6 h-2.4 z" fill="#eff0f1"/>
<path d="M695 436.4 q1.6 2.2 0 4.6" stroke="#9a9ea2" stroke-width="0.7" fill="none"/>
<path d="M708 436.2 a2.4 2.4 0 0 1 0 4.8 z" fill="#eff0f1"/>
<circle cx="723.5" cy="442.3" r="0.9" fill="#eff0f1"/>
<rect x="783" y="441.5" width="8.6" height="1.3" fill="#eff0f1"/>
<text x="748.7" y="442.3" font-size="10" fill="#eff0f1" textLength="25.5" lengthAdjust="spacingAndGlyphs">13:39</text>
</svg>
</body></html>
